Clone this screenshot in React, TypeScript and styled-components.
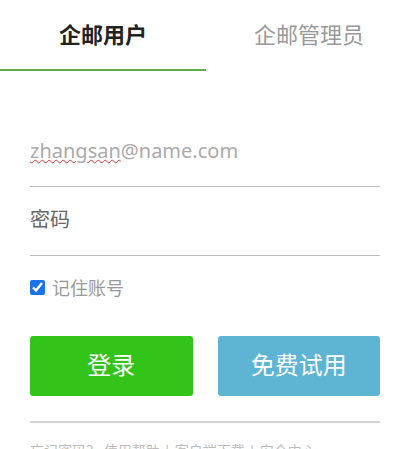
import { useState } from 'react';
import styled, { createGlobalStyle } from 'styled-components';

const GlobalStyle = createGlobalStyle`
  html, body {
    margin: 0;
    padding: 0;
    background: #fff;
    overflow: hidden;
  }
  body {
    font-family: "Noto Sans", "Noto Sans CJK SC", sans-serif;
  }
`;

const tabs = ['企邮用户', '企邮管理员'];

export default function App() {
  const [active, setActive] = useState(0);
  const [remember, setRemember] = useState(true);

  return (
    <>
      <GlobalStyle />
      <Page>
        <TabBar>
          {tabs.map((t, i) => (
            <Tab key={t} $active={active === i} onClick={() => setActive(i)}>
              {t}
            </Tab>
          ))}
        </TabBar>

        <Form onSubmit={(e) => e.preventDefault()}>
          <Field>
            <Input type="text" placeholder="zhangsan@name.com" />
            <Squiggle aria-hidden>zhangsan</Squiggle>
          </Field>
          <Field>
            <Input type="password" placeholder="密码" $dark />
          </Field>

          <Remember>
            <Check
              type="checkbox"
              checked={remember}
              onChange={(e) => setRemember(e.target.checked)}
            />
            记住账号
          </Remember>

          <Buttons>
            <ActionButton type="submit" $color="#33c41a">登录</ActionButton>
            <ActionButton type="button" $color="#5db4d3">免费试用</ActionButton>
          </Buttons>

          <Divider />
          <Footer>忘记密码？ 使用帮助 | 客户端下载 | 安全中心</Footer>
        </Form>
      </Page>
    </>
  );
}

const Page = styled.div`
  width: 412px;
  height: 449px;
  overflow: hidden;
`;

const TabBar = styled.div`
  display: flex;
`;

const Tab = styled.div<{ $active: boolean }>`
  flex: 1;
  height: 71px;
  display: flex;
  align-items: center;
  justify-content: center;
  padding-bottom: 3px;
  box-sizing: border-box;
  font-size: 22px;
  font-weight: ${({ $active }) => ($active ? 700 : 400)};
  color: ${({ $active }) => ($active ? '#222' : '#999')};
  border-bottom: 2px solid ${({ $active }) => ($active ? '#5fae4b' : 'transparent')};
  cursor: pointer;
`;

const Form = styled.form`
  display: flex;
  flex-direction: column;
  padding: 47px 32px 0 30px;
`;

const Field = styled.div`
  position: relative;
  border-bottom: 1px solid #bbb;
`;

const Input = styled.input<{ $dark?: boolean }>`
  display: block;
  width: 100%;
  height: 68px;
  box-sizing: border-box;
  border: none;
  outline: none;
  padding: 0 0 3px;
  font-family: "Noto Sans", "Noto Sans CJK SC", sans-serif;
  font-size: 20px;
  color: #333;
  background: transparent;

  &::placeholder {
    color: ${({ $dark }) => ($dark ? '#666' : '#aaa')};
  }
`;

const Squiggle = styled.span`
  position: absolute;
  left: 0;
  top: 19px;
  font-size: 20px;
  line-height: 26px;
  color: transparent;
  text-decoration: underline wavy #d33;
  text-decoration-thickness: 1px;
  text-underline-offset: 2px;
  pointer-events: none;
`;

const Remember = styled.label`
  display: flex;
  align-items: center;
  gap: 7px;
  margin-top: 16px;
  height: 30px;
  font-size: 18px;
  color: #999;
`;

const Check = styled.input`
  width: 15px;
  height: 15px;
  margin: 0;
  accent-color: #1a73e8;
`;

const Buttons = styled.div`
  display: grid;
  grid-template-columns: 1fr 1fr;
  gap: 25px;
  margin-top: 34px;
`;

const ActionButton = styled.button<{ $color: string }>`
  height: 60px;
  border: none;
  border-radius: 3px;
  padding: 0 0 5px;
  background: ${({ $color }) => $color};
  color: #fff;
  font-family: "Noto Sans", "Noto Sans CJK SC", sans-serif;
  font-size: 24px;
  cursor: pointer;
`;

const Divider = styled.hr`
  margin: 25px 0 0;
  border: none;
  height: 2px;
  background: #d4d4d4;
`;

const Footer = styled.div`
  margin-top: 17px;
  font-size: 14px;
  color: #bbb;
`;
